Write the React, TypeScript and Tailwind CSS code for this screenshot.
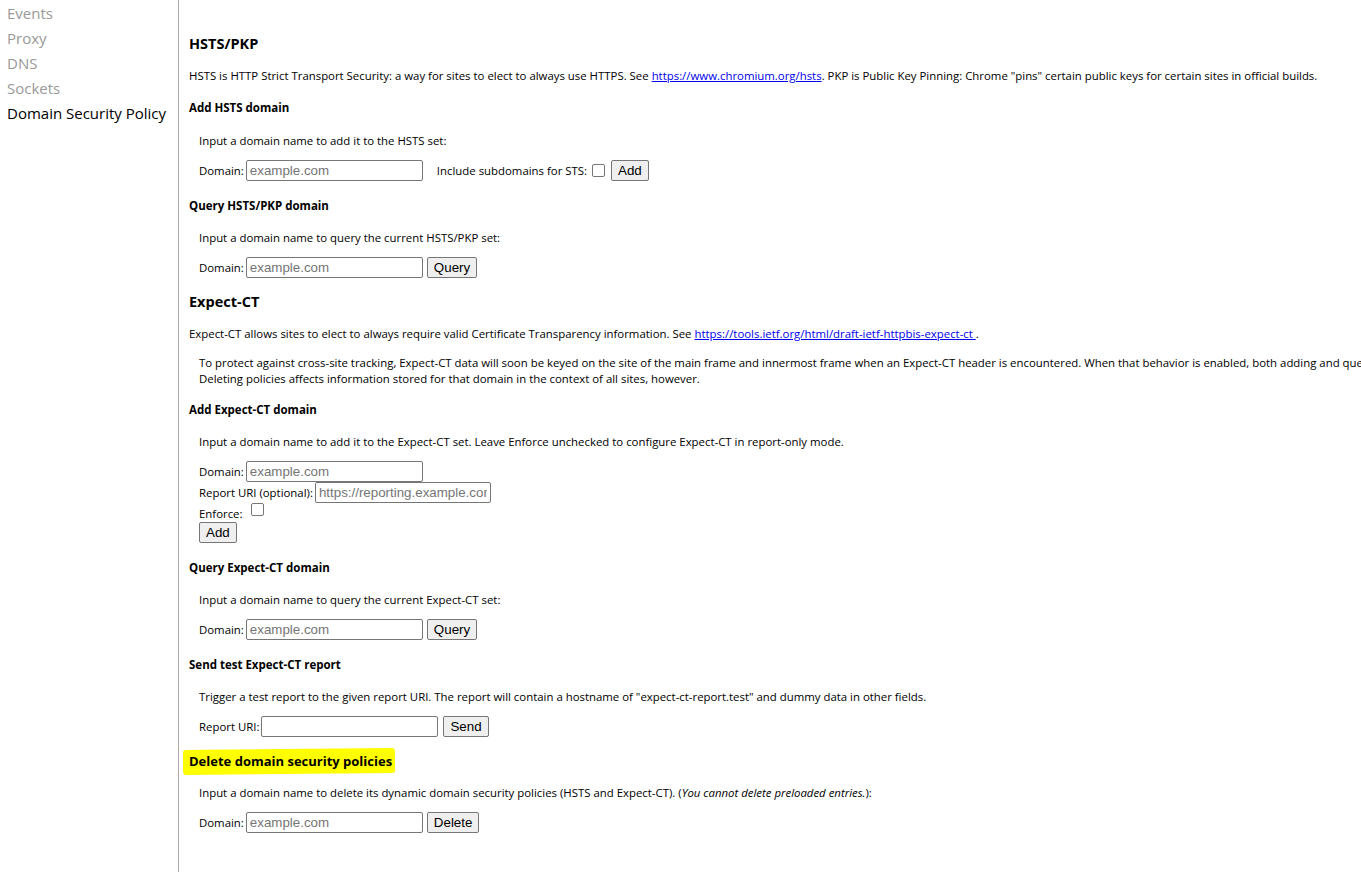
import React from "react";

const F = { fontFamily: '"Open Sans", "Noto Sans", sans-serif' };
const A = { fontFamily: '"Liberation Sans", Arial, sans-serif' };

function Input({ placeholder, w = "w-[177px]" }: { placeholder?: string; w?: string }) {
  return (
    <input
      style={A}
      placeholder={placeholder}
      className={`${w} h-[21px] border border-[#767676] rounded-[2px] px-[3px] text-[13.33px] text-black placeholder:text-[#757575] outline-none bg-white`}
    />
  );
}

function Btn({ children }: { children: React.ReactNode }) {
  return (
    <button
      style={A}
      className="h-[21px] px-[6px] border border-[#767676] rounded-[2px] bg-[#efefef] text-[13.33px] text-black leading-none"
    >
      {children}
    </button>
  );
}

function Check() {
  return <span className="inline-block w-[13px] h-[13px] border border-[#767676] rounded-[2px] bg-white" />;
}

function H2({ children, className = "" }: { children: React.ReactNode; className?: string }) {
  return <h2 className={`text-[14.5px] font-bold leading-[20px] ${className}`}>{children}</h2>;
}
function H3({ children, className = "" }: { children: React.ReactNode; className?: string }) {
  return <h3 className={`text-[11.5px] font-bold leading-[16px] ${className}`}>{children}</h3>;
}
function P({ children, className = "" }: { children: React.ReactNode; className?: string }) {
  return <p className={`text-[11.4px] leading-[16px] whitespace-nowrap ${className}`}>{children}</p>;
}

export default function App() {
  return (
    <div style={F} className="flex w-[1361px] h-[872px] overflow-hidden bg-white text-black">
      <div className="w-[179px] shrink-0 border-r border-[#a9a9a9] h-full pl-[7px] pt-[1px] text-[15px]">
        <div className="h-[25px] leading-[25px] text-[#999]">Events</div>
        <div className="h-[25px] leading-[25px] text-[#999]">Proxy</div>
        <div className="h-[25px] leading-[25px] text-[#999]">DNS</div>
        <div className="h-[25px] leading-[25px] text-[#999]">Sockets</div>
        <div className="h-[25px] leading-[25px] text-black whitespace-nowrap">Domain Security Policy</div>
      </div>
      <div className="flex-1 min-w-0 pl-[10px] pt-[34px] flex flex-col items-start overflow-hidden">
        <H2>HSTS/PKP</H2>
        <P className="mt-[14px]">
          HSTS is HTTP Strict Transport Security: a way for sites to elect to always use HTTPS. See{" "}
          <a className="text-[#0000ee] underline" href="#">https://www.chromium.org/hsts</a>. PKP is Public Key Pinning: Chrome "pins" certain public keys for certain sites in official builds.
        </P>
        <H3 className="mt-[16px]">Add HSTS domain</H3>
        <div className="pl-[10px] flex flex-col items-start">
          <P className="mt-[17px]">Input a domain name to add it to the HSTS set:</P>
          <div className="mt-[11px] flex items-center text-[11.4px]">
            <span className="mr-[2px]">Domain:</span>
            <Input placeholder="example.com" />
            <span className="ml-[14px] mr-[5px]">Include subdomains for STS:</span>
            <Check />
            <span className="ml-[6px]"><Btn>Add</Btn></span>
          </div>
        </div>
        <H3 className="mt-[17px]">Query HSTS/PKP domain</H3>
        <div className="pl-[10px] flex flex-col items-start">
          <P className="mt-[16px]">Input a domain name to query the current HSTS/PKP set:</P>
          <div className="mt-[11px] flex items-center text-[11.4px]">
            <span className="mr-[2px]">Domain:</span>
            <Input placeholder="example.com" />
            <span className="ml-[4px]"><Btn>Query</Btn></span>
          </div>
        </div>
        <H2 className="mt-[14px]">Expect-CT</H2>
        <P className="mt-[14px]">
          Expect-CT allows sites to elect to always require valid Certificate Transparency information. See{" "}
          <a className="text-[#0000ee] underline" href="#">https://tools.ietf.org/html/draft-ietf-httpbis-expect-ct </a>.
        </P>
        <div className="pl-[10px] mt-[13px]">
          <P>
            To protect against cross-site tracking, Expect-CT data will soon be keyed on the site of the main frame and innermost frame when an Expect-CT header is encountered. When that behavior is enabled, both adding and querying policies will use a transient key.
          </P>
          <P>Deleting policies affects information stored for that domain in the context of all sites, however.</P>
        </div>
        <H3 className="mt-[15px]">Add Expect-CT domain</H3>
        <div className="pl-[10px] flex flex-col items-start text-[11.4px]">
          <P className="mt-[16px]">Input a domain name to add it to the Expect-CT set. Leave Enforce unchecked to configure Expect-CT in report-only mode.</P>
          <div className="mt-[11px] flex items-center">
            <span className="mr-[2px]">Domain:</span>
            <Input placeholder="example.com" />
          </div>
          <div className="flex items-center">
            <span className="mr-[2px]">Report URI (optional):</span>
            <Input placeholder="https://reporting.example.com" w="w-[176px]" />
          </div>
          <div className="flex items-center h-[19px]">
            <span className="mr-[8px] mt-[2px]">Enforce:</span>
            <span className="mt-[-6px] flex"><Check /></span>
          </div>
          <Btn>Add</Btn>
        </div>
        <H3 className="mt-[17px]">Query Expect-CT domain</H3>
        <div className="pl-[10px] flex flex-col items-start">
          <P className="mt-[16px]">Input a domain name to query the current Expect-CT set:</P>
          <div className="mt-[11px] flex items-center text-[11.4px]">
            <span className="mr-[2px]">Domain:</span>
            <Input placeholder="example.com" />
            <span className="ml-[4px]"><Btn>Query</Btn></span>
          </div>
        </div>
        <H3 className="mt-[17px]">Send test Expect-CT report</H3>
        <div className="pl-[10px] flex flex-col items-start">
          <P className="mt-[16px]">Trigger a test report to the given report URI. The report will contain a hostname of "expect-ct-report.test" and dummy data in other fields.</P>
          <div className="mt-[11px] flex items-center text-[11.4px]">
            <span className="mr-[2px]">Report URI:</span>
            <Input />
            <span className="ml-[5px]"><Btn>Send</Btn></span>
          </div>
        </div>
        <div className="relative mt-[15px]">
          <span className="absolute left-[-6px] right-[-3px] top-[-3px] bottom-[-4px] bg-[#ffff00] rounded-[3px] -rotate-[0.6deg]" />
          <h3 className="relative text-[13px] font-bold leading-[18px]">Delete domain security policies</h3>
        </div>
        <div className="pl-[10px] flex flex-col items-start">
          <P className="mt-[15px]">
            Input a domain name to delete its dynamic domain security policies (HSTS and Expect-CT). (<i>You cannot delete preloaded entries.</i>):
          </P>
          <div className="mt-[11px] flex items-center text-[11.4px]">
            <span className="mr-[2px]">Domain:</span>
            <Input placeholder="example.com" />
            <span className="ml-[4px]"><Btn>Delete</Btn></span>
          </div>
        </div>
      </div>
    </div>
  );
}
